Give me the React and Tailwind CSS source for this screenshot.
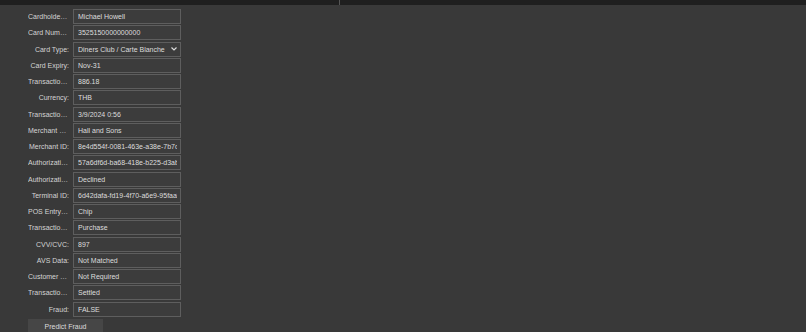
import React from 'react';

const fields = [
  { label: 'Cardholder Name:', value: 'Michael Howell' },
  { label: 'Card Number:', value: '3525150000000000' },
  { label: 'Card Type:', value: 'Diners Club / Carte Blanche', select: true },
  { label: 'Card Expiry:', value: 'Nov-31' },
  { label: 'Transaction Amount:', value: '886.18' },
  { label: 'Currency:', value: 'THB' },
  { label: 'Transaction Date:', value: '3/9/2024 0:56' },
  { label: 'Merchant Name:', value: 'Hall and Sons' },
  { label: 'Merchant ID:', value: '8e4d554f-0081-463e-a38e-7b7dc' },
  { label: 'Authorization Code:', value: '57a6df6d-ba68-418e-b225-d3abf' },
  { label: 'Authorization Status:', value: 'Declined' },
  { label: 'Terminal ID:', value: '6d42dafa-fd19-4f70-a6e9-95faab' },
  { label: 'POS Entry Mode:', value: 'Chip' },
  { label: 'Transaction Type:', value: 'Purchase' },
  { label: 'CVV/CVC:', value: '897' },
  { label: 'AVS Data:', value: 'Not Matched' },
  { label: 'Customer Authentication:', value: 'Not Required' },
  { label: 'Transaction Status:', value: 'Settled' },
  { label: 'Fraud:', value: 'FALSE' },
];

const App = () => {
  return (
    <div
      className="w-[806px] h-[332px] overflow-hidden bg-[#393939] text-[#dcdcdc]"
      style={{ fontFamily: '"Liberation Sans", Arial, sans-serif' }}
    >
      {/* Top strip */}
      <div className="flex h-[5px] bg-[#1f1f1f]">
        <div className="w-[340px] border-r border-[#555]" />
        <div className="flex-1" />
      </div>

      {/* Form */}
      <div className="pl-[28px] pt-[4px] flex flex-col gap-[1.25px]">
        {fields.map((f) => (
          <div key={f.label} className="flex items-center h-[15px]">
            <div className="w-[41px] h-[15px] text-right text-[7px] text-[#d4d4d4] truncate leading-[15px]">
              {f.label}
            </div>
            <div className="ml-[4px] w-[108px] h-[15px] border border-[#5e5e5e] bg-[#3c3c3c] flex items-center pl-[4px] pr-[3px] text-[7px] leading-[13px] whitespace-nowrap overflow-hidden">
              <span className="flex-1 overflow-hidden">{f.value}</span>
              {f.select && (
                <svg width="6" height="4" viewBox="0 0 6 4" className="shrink-0 ml-[2px]">
                  <path d="M0.5 0.5 L3 3 L5.5 0.5" stroke="#dcdcdc" strokeWidth="1.2" fill="none" />
                </svg>
              )}
            </div>
          </div>
        ))}
        <button className="mt-[1px] w-[75px] h-[16px] bg-[#464646] text-[7px] text-[#dcdcdc] leading-none">
          Predict Fraud
        </button>
      </div>
    </div>
  );
};

export default App;
